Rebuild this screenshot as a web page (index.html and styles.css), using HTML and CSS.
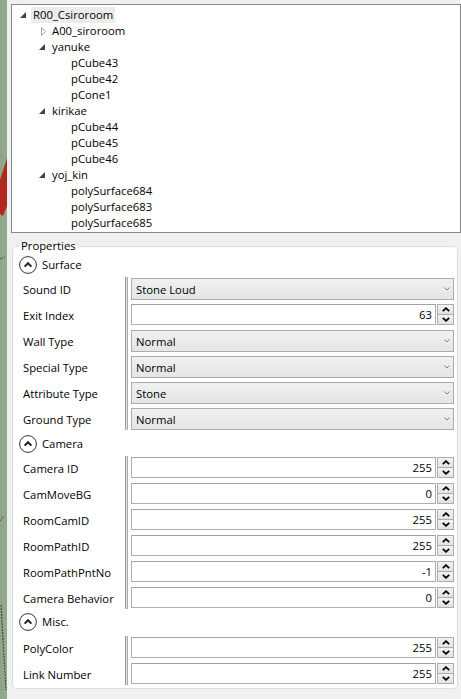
FILE: index.html
```html
<!DOCTYPE html>
<html>
<head>
<meta charset="utf-8">
<link rel="stylesheet" href="styles.css">
</head>
<body>
<div class="app">
  <div class="viewport">
    <svg width="7" height="699" viewBox="0 0 7 699">
      <rect width="7" height="699" fill="#8ea587"/>
      <rect x="3" width="4" height="699" fill="#93a98c"/>
      <polygon points="7,158 7,206 3,216 0,214 0,180" fill="#b0281f"/>
      <line x1="0" y1="259" x2="5" y2="257" stroke="#222" stroke-width="0.8" stroke-dasharray="1 1"/>
      <line x1="0" y1="521" x2="4" y2="516" stroke="#222" stroke-width="0.8" stroke-dasharray="1 1"/>
      <line x1="1" y1="605" x2="6" y2="690" stroke="#222" stroke-width="0.8" stroke-dasharray="2 1"/>
    </svg>
  </div>
  <div class="panel">
    <div class="tree">
      <div class="node l0"><span class="exp"><svg width="6" height="6"><polygon points="6,0 6,6 0,6" fill="#404040"/></svg></span><span class="txt sel">R00_Csiroroom</span></div>
      <div class="node l1"><span class="exp"><svg class="closed" width="5" height="9"><polygon points="0.5,0.5 4.5,4.5 0.5,8.5" fill="none" stroke="#a6a6a6"/></svg></span><span class="txt">A00_siroroom</span></div>
      <div class="node l1"><span class="exp"><svg width="6" height="6"><polygon points="6,0 6,6 0,6" fill="#404040"/></svg></span><span class="txt">yanuke</span></div>
      <div class="node l2"><span class="exp"></span><span class="txt">pCube43</span></div>
      <div class="node l2"><span class="exp"></span><span class="txt">pCube42</span></div>
      <div class="node l2"><span class="exp"></span><span class="txt">pCone1</span></div>
      <div class="node l1"><span class="exp"><svg width="6" height="6"><polygon points="6,0 6,6 0,6" fill="#404040"/></svg></span><span class="txt">kirikae</span></div>
      <div class="node l2"><span class="exp"></span><span class="txt">pCube44</span></div>
      <div class="node l2"><span class="exp"></span><span class="txt">pCube45</span></div>
      <div class="node l2"><span class="exp"></span><span class="txt">pCube46</span></div>
      <div class="node l1"><span class="exp"><svg width="6" height="6"><polygon points="6,0 6,6 0,6" fill="#404040"/></svg></span><span class="txt">yoj_kin</span></div>
      <div class="node l2"><span class="exp"></span><span class="txt">polySurface684</span></div>
      <div class="node l2"><span class="exp"></span><span class="txt">polySurface683</span></div>
      <div class="node l2"><span class="exp"></span><span class="txt">polySurface685</span></div>
    </div>

    <fieldset class="props">
      <legend>Properties</legend>

      <div class="hdr"><svg class="toggle" width="18" height="18" viewBox="0 0 18 18"><circle cx="9" cy="9" r="8.4" fill="#fff" stroke="#333" stroke-width="1"/><path d="M5.6 10.6 L9 7.2 L12.4 10.6" fill="none" stroke="#222" stroke-width="2"/></svg><span>Surface</span></div>
      <div class="sect">
        <div class="labels">
          <div class="lrow">Sound ID</div>
          <div class="lrow">Exit Index</div>
          <div class="lrow">Wall Type</div>
          <div class="lrow">Special Type</div>
          <div class="lrow">Attribute Type</div>
          <div class="lrow">Ground Type</div>
        </div>
        <div class="split"></div>
        <div class="ctrls">
          <div class="crow"><div class="combo"><span>Stone Loud</span><svg width="6" height="4"><path d="M0.5 0.5 L3 3 L5.5 0.5" fill="none" stroke="#808080"/></svg></div></div>
          <div class="crow"><div class="num"><div class="box">63</div><div class="spin"><i><svg width="8" height="5"><path d="M0.8 4.2 L4 1.2 L7.2 4.2" fill="none" stroke="#000" stroke-width="1.8"/></svg></i><i><svg width="8" height="5"><path d="M0.8 0.8 L4 3.8 L7.2 0.8" fill="none" stroke="#000" stroke-width="1.8"/></svg></i></div></div></div>
          <div class="crow"><div class="combo"><span>Normal</span><svg width="6" height="4"><path d="M0.5 0.5 L3 3 L5.5 0.5" fill="none" stroke="#808080"/></svg></div></div>
          <div class="crow"><div class="combo"><span>Normal</span><svg width="6" height="4"><path d="M0.5 0.5 L3 3 L5.5 0.5" fill="none" stroke="#808080"/></svg></div></div>
          <div class="crow"><div class="combo"><span>Stone</span><svg width="6" height="4"><path d="M0.5 0.5 L3 3 L5.5 0.5" fill="none" stroke="#808080"/></svg></div></div>
          <div class="crow"><div class="combo"><span>Normal</span><svg width="6" height="4"><path d="M0.5 0.5 L3 3 L5.5 0.5" fill="none" stroke="#808080"/></svg></div></div>
        </div>
      </div>

      <div class="hdr"><svg class="toggle" width="18" height="18" viewBox="0 0 18 18"><circle cx="9" cy="9" r="8.4" fill="#fff" stroke="#333" stroke-width="1"/><path d="M5.6 10.6 L9 7.2 L12.4 10.6" fill="none" stroke="#222" stroke-width="2"/></svg><span>Camera</span></div>
      <div class="sect">
        <div class="labels">
          <div class="lrow">Camera ID</div>
          <div class="lrow">CamMoveBG</div>
          <div class="lrow">RoomCamID</div>
          <div class="lrow">RoomPathID</div>
          <div class="lrow">RoomPathPntNo</div>
          <div class="lrow">Camera Behavior</div>
        </div>
        <div class="split"></div>
        <div class="ctrls">
          <div class="crow"><div class="num"><div class="box">255</div><div class="spin"><i><svg width="8" height="5"><path d="M0.8 4.2 L4 1.2 L7.2 4.2" fill="none" stroke="#000" stroke-width="1.8"/></svg></i><i><svg width="8" height="5"><path d="M0.8 0.8 L4 3.8 L7.2 0.8" fill="none" stroke="#000" stroke-width="1.8"/></svg></i></div></div></div>
          <div class="crow"><div class="num"><div class="box">0</div><div class="spin"><i><svg width="8" height="5"><path d="M0.8 4.2 L4 1.2 L7.2 4.2" fill="none" stroke="#000" stroke-width="1.8"/></svg></i><i><svg width="8" height="5"><path d="M0.8 0.8 L4 3.8 L7.2 0.8" fill="none" stroke="#000" stroke-width="1.8"/></svg></i></div></div></div>
          <div class="crow"><div class="num"><div class="box">255</div><div class="spin"><i><svg width="8" height="5"><path d="M0.8 4.2 L4 1.2 L7.2 4.2" fill="none" stroke="#000" stroke-width="1.8"/></svg></i><i><svg width="8" height="5"><path d="M0.8 0.8 L4 3.8 L7.2 0.8" fill="none" stroke="#000" stroke-width="1.8"/></svg></i></div></div></div>
          <div class="crow"><div class="num"><div class="box">255</div><div class="spin"><i><svg width="8" height="5"><path d="M0.8 4.2 L4 1.2 L7.2 4.2" fill="none" stroke="#000" stroke-width="1.8"/></svg></i><i><svg width="8" height="5"><path d="M0.8 0.8 L4 3.8 L7.2 0.8" fill="none" stroke="#000" stroke-width="1.8"/></svg></i></div></div></div>
          <div class="crow"><div class="num"><div class="box">-1</div><div class="spin"><i><svg width="8" height="5"><path d="M0.8 4.2 L4 1.2 L7.2 4.2" fill="none" stroke="#000" stroke-width="1.8"/></svg></i><i><svg width="8" height="5"><path d="M0.8 0.8 L4 3.8 L7.2 0.8" fill="none" stroke="#000" stroke-width="1.8"/></svg></i></div></div></div>
          <div class="crow"><div class="num"><div class="box">0</div><div class="spin"><i><svg width="8" height="5"><path d="M0.8 4.2 L4 1.2 L7.2 4.2" fill="none" stroke="#000" stroke-width="1.8"/></svg></i><i><svg width="8" height="5"><path d="M0.8 0.8 L4 3.8 L7.2 0.8" fill="none" stroke="#000" stroke-width="1.8"/></svg></i></div></div></div>
        </div>
      </div>

      <div class="hdr misc"><svg class="toggle" width="18" height="18" viewBox="0 0 18 18"><circle cx="9" cy="9" r="8.4" fill="#fff" stroke="#333" stroke-width="1"/><path d="M5.6 10.6 L9 7.2 L12.4 10.6" fill="none" stroke="#222" stroke-width="2"/></svg><span>Misc.</span></div>
      <div class="sect">
        <div class="labels">
          <div class="lrow">PolyColor</div>
          <div class="lrow">Link Number</div>
        </div>
        <div class="split"></div>
        <div class="ctrls">
          <div class="crow"><div class="num"><div class="box">255</div><div class="spin"><i><svg width="8" height="5"><path d="M0.8 4.2 L4 1.2 L7.2 4.2" fill="none" stroke="#000" stroke-width="1.8"/></svg></i><i><svg width="8" height="5"><path d="M0.8 0.8 L4 3.8 L7.2 0.8" fill="none" stroke="#000" stroke-width="1.8"/></svg></i></div></div></div>
          <div class="crow"><div class="num"><div class="box">255</div><div class="spin"><i><svg width="8" height="5"><path d="M0.8 4.2 L4 1.2 L7.2 4.2" fill="none" stroke="#000" stroke-width="1.8"/></svg></i><i><svg width="8" height="5"><path d="M0.8 0.8 L4 3.8 L7.2 0.8" fill="none" stroke="#000" stroke-width="1.8"/></svg></i></div></div></div>
        </div>
      </div>
    </fieldset>
  </div>
</div>
</body>
</html>
```

FILE: styles.css
```css
html, body {
  margin: 0;
  padding: 0;
}
body {
  width: 461px;
  height: 699px;
  overflow: hidden;
  font-family: "Open Sans", "Noto Sans", sans-serif;
  font-size: 11.3px;
  color: #000;
  background: #f0f0f0;
}
.app {
  display: flex;
  height: 699px;
}
.viewport {
  width: 7px;
  flex: none;
  line-height: 0;
}
.panel {
  flex: 1;
  background: #f0f0f0;
  padding: 4px 0 0 4px;
}

/* tree */
.tree {
  height: 229px;
  box-sizing: border-box;
  border: 1px solid #828790;
  background: #fff;
  padding-top: 2px;
}
.node {
  display: flex;
  align-items: center;
  height: 16px;
}
.l0 { padding-left: 3px; }
.l1 { padding-left: 22px; }
.l2 { padding-left: 41px; }
.exp {
  width: 16px;
  height: 16px;
  flex: none;
  display: flex;
  align-items: center;
  justify-content: center;
}
.exp .closed { margin-left: 2px; }
.txt {
  padding: 0 2px;
  line-height: 16px;
  white-space: nowrap;
}
.sel { background: #ececec; }

/* properties group */
.props {
  margin: 5px 0 0 1px;
  width: 446px;
  box-sizing: border-box;
  border: 1px solid #d5dfe5;
  border-radius: 4px;
  background: #fff;
  padding: 0 3px 0 6px;
}
.props legend {
  padding: 0 2px;
  line-height: 16px;
}
.hdr {
  display: flex;
  align-items: flex-start;
  height: 23px;
  gap: 5px;
}
.hdr .toggle {
  margin-top: 2px;
  flex: none;
}
.hdr span {
  line-height: 22px;
}
.hdr.misc {
  height: 24px;
}
.hdr.misc .toggle {
  margin-top: 1px;
}
.hdr.misc span {
  line-height: 20px;
}
.sect {
  display: flex;
  padding-left: 4px;
}
.labels {
  width: 102px;
  flex: none;
}
.lrow {
  height: 26px;
  line-height: 26px;
  white-space: nowrap;
}
.split {
  width: 1px;
  flex: none;
  border-left: 1px solid #9a9a9a;
  border-right: 1px solid #a8a8a8;
  background: #e4e4e4;
  margin: 0 3px 3px 0;
}
.ctrls {
  flex: 1;
}
.crow {
  height: 26px;
  padding-top: 1px;
  box-sizing: border-box;
}
.combo {
  height: 22px;
  box-sizing: border-box;
  border: 1px solid #acacac;
  background: linear-gradient(#f0f0f0, #e5e5e5);
  display: flex;
  align-items: center;
  justify-content: space-between;
  padding: 0 3px 0 4px;
}
.num {
  display: flex;
  height: 21px;
  gap: 1px;
}
.box {
  flex: 1;
  box-sizing: border-box;
  border: 1px solid #abadb3;
  border-top-color: #a0a3a9;
  background: #fff;
  text-align: right;
  padding-right: 3px;
  line-height: 19px;
}
.spin {
  width: 17px;
  flex: none;
  box-sizing: border-box;
  border: 1px solid #acacac;
  display: flex;
  flex-direction: column;
}
.spin i {
  flex: 1;
  display: flex;
  align-items: center;
  justify-content: center;
  background: linear-gradient(#f2f2f2, #e3e3e3);
}
.spin i + i {
  border-top: 1px solid #acacac;
}
```
